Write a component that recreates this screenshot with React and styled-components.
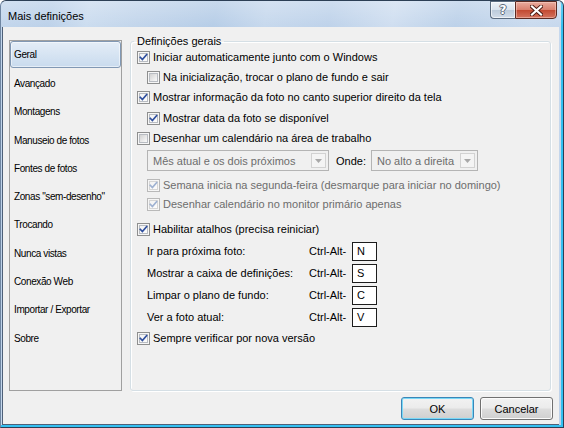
import React from 'react';
import styled, { createGlobalStyle } from 'styled-components';

const GlobalStyle = createGlobalStyle`
  html, body {
    margin: 0;
    padding: 0;
    background: #ffffff;
  }
  body {
    font-family: "Liberation Sans", Arial, sans-serif;
    font-size: 11px;
    color: #000;
  }
`;

const Window = styled.div`
  width: 564px;
  height: 428px;
  box-sizing: border-box;
  display: flex;
  flex-direction: column;
  border: 1px solid #2c3f55;
  border-left-color: #6f86a2;
  border-radius: 6px 6px 0 0;
  padding: 0 4px 2px 1px;
  background: linear-gradient(
    100deg,
    #c3d6ec 0%,
    #bcd1e9 8%,
    #cbdcef 14%,
    #c2d5eb 22%,
    #b6cde7 34%,
    #c6d8ed 42%,
    #bed2ea 52%,
    #cfdef0 62%,
    #bcd1e9 72%,
    #c9daee 84%,
    #bed2ea 100%
  );
  box-shadow: inset -1px -1px 0 #34c0f1, inset -2px -2px 0 #34c0f1;
  overflow: hidden;
`;

const TitleBar = styled.div`
  height: 26px;
  margin: 0 -4px 0 -1px;
  display: flex;
  justify-content: space-between;
  align-items: flex-start;
  padding: 0 6px 0 7px;
  background: linear-gradient(rgba(255, 255, 255, 0.25), rgba(255, 255, 255, 0));
`;

const Title = styled.div`
  font-size: 11px;
  line-height: 13px;
  margin-top: 9px;
  color: #000;
`;

const CaptionButtons = styled.div`
  display: flex;
`;

const HelpButton = styled.div`
  width: 25px;
  height: 18px;
  box-sizing: border-box;
  border: 1px solid #5b6c80;
  border-right: none;
  border-radius: 0 0 0 4px;
  background: linear-gradient(#eef3f9 0%, #d9e3ee 48%, #bccbdb 52%, #d2dde9 100%);
  box-shadow: inset 0 0 0 1px rgba(255, 255, 255, 0.6);
  display: flex;
  align-items: center;
  justify-content: center;
  font-family: "DejaVu Sans", sans-serif;
  font-weight: bold;
  font-size: 12px;
  color: #ffffff;
  text-shadow: 1px 0 0 #5d6b7b, -1px 0 0 #5d6b7b, 0 1px 0 #5d6b7b, 0 -1px 0 #5d6b7b;
`;

const CloseButton = styled.div`
  width: 42px;
  height: 18px;
  box-sizing: border-box;
  border: 1px solid #5b2a22;
  border-radius: 0 0 4px 0;
  background: linear-gradient(#e9ab9e 0%, #d9806e 48%, #c24a32 52%, #d4745f 100%);
  box-shadow: inset 0 0 0 1px rgba(255, 220, 210, 0.45);
  display: flex;
  align-items: center;
  justify-content: center;
`;

const Client = styled.div`
  flex: 1;
  display: flex;
  flex-direction: column;
  background: #f0f0f0;
  border-left: 1px solid #4e6078;
  border-bottom: 1px solid #4e6078;
  padding: 8px 0 4px 6px;
`;

const Body = styled.div`
  height: 356px;
  display: flex;
  gap: 8px;
  padding-right: 8px;
`;

const NavList = styled.div`
  width: 113px;
  height: 351px;
  box-sizing: border-box;
  margin-top: 5px;
  border: 1px solid #a0a0a0;
  display: flex;
  flex-direction: column;
`;

const NavItem = styled.div`
  height: 28.3px;
  flex: none;
  box-sizing: border-box;
  display: flex;
  align-items: center;
  padding-left: 3px;
  font-size: 10px;
  letter-spacing: -0.4px;
  border: 1px solid transparent;
  border-radius: 3px;
  ${p =>
    p.$selected &&
    `
    height: 27.3px;
    margin-bottom: 1px;
    border-color: #8198b4;
    background: linear-gradient(#e4edf7, #c9dbee);
    box-shadow: inset 0 0 0 1px rgba(255, 255, 255, 0.5);
  `}
`;

const Group = styled.fieldset`
  flex: 1;
  min-width: 0;
  margin: 0;
  padding: 0 0 0 6px;
  border: 1px solid #d5dfe5;
  border-radius: 3px;
  box-shadow: inset 1px 1px 0 #ffffff, 1px 1px 0 #ffffff;
  display: flex;
  flex-direction: column;
`;

const Legend = styled.legend`
  font-size: 11px;
  line-height: 12px;
  padding: 0 3px;
  margin-left: -3px;
  color: #000;
`;

const CheckRow = styled.div`
  display: flex;
  align-items: center;
  gap: 3px;
  height: ${p => p.$h || 20}px;
  margin-top: ${p => p.$mt || 0}px;
  padding-left: ${p => (p.$indent ? 10 : 0)}px;
  color: ${p => (p.$disabled ? '#6d6d6d' : '#000')};
  line-height: 13px;
  white-space: nowrap;
`;

const BoxWrap = styled.span`
  width: 13px;
  height: 13px;
  flex: none;
  display: block;
`;

const SelectRow = styled.div`
  display: flex;
  align-items: center;
  height: 21px;
  margin-top: 2px;
  padding-left: 10px;
`;

const Select = styled.div`
  width: ${p => p.$w}px;
  height: 21px;
  box-sizing: border-box;
  border: 1px solid #b4b4b4;
  display: flex;
  align-items: center;
  justify-content: space-between;
  padding: 0 2px 0 5px;
  color: #6d6d6d;
`;

const SelectArrow = styled.span`
  width: 15px;
  height: 15px;
  box-sizing: border-box;
  border: 1px solid #d2d2d2;
  background: #f4f4f4;
  display: flex;
  align-items: center;
  justify-content: center;
`;

const WhereLabel = styled.span`
  margin: 0 5px 0 7px;
`;

const ShortcutRow = styled.div`
  display: grid;
  grid-template-columns: 162px 43px 25px;
  align-items: center;
  height: 22px;
  padding-left: 10px;
  margin-top: ${p => p.$mt || 0}px;
`;

const KeyBox = styled.div`
  width: 25px;
  height: 19px;
  box-sizing: border-box;
  border: 1px solid #1c1c1c;
  background: #ffffff;
  padding-left: 4px;
  display: flex;
  align-items: center;
`;

const Footer = styled.div`
  display: flex;
  justify-content: flex-end;
  gap: 6px;
  margin-top: 6px;
  padding-right: 6px;
`;

const Button = styled.div`
  width: 73px;
  height: 23px;
  box-sizing: border-box;
  border: 1px solid ${p => (p.$default ? '#3a86b8' : '#707070')};
  border-radius: 3px;
  background: linear-gradient(#f2f2f2 0%, #ebebeb 48%, #dddddd 52%, #cfcfcf 100%);
  box-shadow: inset 0 0 0 1px ${p => (p.$default ? '#7ad8f6' : '#fbfbfb')};
  display: flex;
  align-items: center;
  justify-content: center;
  font-size: 11px;
`;

const CheckBox = ({ checked, disabled }) => {
  const border = disabled ? '#b9b9b9' : '#8e8f8f';
  const tick = disabled ? '#9fb2d2' : '#2f4f9e';
  const id = `g${checked ? 1 : 0}${disabled ? 1 : 0}`;
  return (
    <BoxWrap>
      <svg width="13" height="13" viewBox="0 0 13 13">
        <defs>
          <linearGradient id={id} x1="0" y1="0" x2="1" y2="1">
            <stop offset="0" stopColor={checked ? '#f2f2f2' : '#cfcfcf'} />
            <stop offset="1" stopColor="#fdfdfd" />
          </linearGradient>
        </defs>
        <rect x="0.5" y="0.5" width="12" height="12" fill="#f6f6f6" stroke={border} />
        <rect x="2.5" y="2.5" width="8" height="8" fill={`url(#${id})`} stroke={disabled ? '#d6d6d6' : '#b8bcc2'} />
        {checked && (
          <path d="M3.3 6.4 L5.4 8.6 L9.6 3.6" fill="none" stroke={tick} strokeWidth="1.7" strokeLinecap="square" />
        )}
      </svg>
    </BoxWrap>
  );
};

const Check = ({ checked, disabled, indent, h, mt, children }) => (
  <CheckRow $indent={indent} $disabled={disabled} $h={h} $mt={mt}>
    <CheckBox checked={checked} disabled={disabled} />
    <span>{children}</span>
  </CheckRow>
);

const Dropdown = ({ w, children }) => (
  <Select $w={w}>
    <span>{children}</span>
    <SelectArrow>
      <svg width="7" height="4" viewBox="0 0 7 4">
        <path d="M0 0 H7 L3.5 4 Z" fill="#a8a8a8" />
      </svg>
    </SelectArrow>
  </Select>
);

const navItems = [
  'Geral',
  'Avançado',
  'Montagens',
  'Manuseio de fotos',
  'Fontes de fotos',
  'Zonas "sem-desenho"',
  'Trocando',
  'Nunca vistas',
  'Conexão Web',
  'Importar / Exportar',
  'Sobre',
];

const shortcuts = [
  ['Ir para próxima foto:', 'N'],
  ['Mostrar a caixa de definições:', 'S'],
  ['Limpar o plano de fundo:', 'C'],
  ['Ver a foto atual:', 'V'],
];

export default function App() {
  return (
    <>
      <GlobalStyle />
      <Window>
        <TitleBar>
          <Title>Mais definições</Title>
          <CaptionButtons>
            <HelpButton>?</HelpButton>
            <CloseButton>
              <svg width="13" height="11" viewBox="0 0 13 11">
                <path
                  d="M2 1.5 L11 9.5 M11 1.5 L2 9.5"
                  stroke="#4a1a12"
                  strokeWidth="4"
                  strokeLinecap="square"
                />
                <path
                  d="M2 1.5 L11 9.5 M11 1.5 L2 9.5"
                  stroke="#ffffff"
                  strokeWidth="2.2"
                  strokeLinecap="square"
                />
              </svg>
            </CloseButton>
          </CaptionButtons>
        </TitleBar>

        <Client>
          <Body>
            <NavList>
              {navItems.map((item, i) => (
                <NavItem key={item} $selected={i === 0}>
                  {item}
                </NavItem>
              ))}
            </NavList>

            <Group>
              <Legend>Definições gerais</Legend>
              <Check checked>Iniciar automaticamente junto com o Windows</Check>
              <Check indent>Na inicialização, trocar o plano de fundo e sair</Check>
              <Check checked h={21}>Mostrar informação da foto no canto superior direito da tela</Check>
              <Check checked indent>Mostrar data da foto se disponível</Check>
              <Check>Desenhar um calendário na área de trabalho</Check>
              <SelectRow>
                <Dropdown w={182}>Mês atual e os dois próximos</Dropdown>
                <WhereLabel>Onde:</WhereLabel>
                <Dropdown w={107}>No alto a direita</Dropdown>
              </SelectRow>
              <Check checked disabled indent mt={4}>
                Semana inicia na segunda-feira (desmarque para iniciar no domingo)
              </Check>
              <Check checked disabled indent h={19}>
                Desenhar calendário no monitor primário apenas
              </Check>
              <Check checked mt={5}>Habilitar atalhos (precisa reiniciar)</Check>
              {shortcuts.map(([label, key], i) => (
                <ShortcutRow key={key} $mt={i === 0 ? 1 : 0}>
                  <span>{label}</span>
                  <span>Ctrl-Alt-</span>
                  <KeyBox>{key}</KeyBox>
                </ShortcutRow>
              ))}
              <Check checked>Sempre verificar por nova versão</Check>
            </Group>
          </Body>

          <Footer>
            <Button $default>OK</Button>
            <Button>Cancelar</Button>
          </Footer>
        </Client>
      </Window>
    </>
  );
}
